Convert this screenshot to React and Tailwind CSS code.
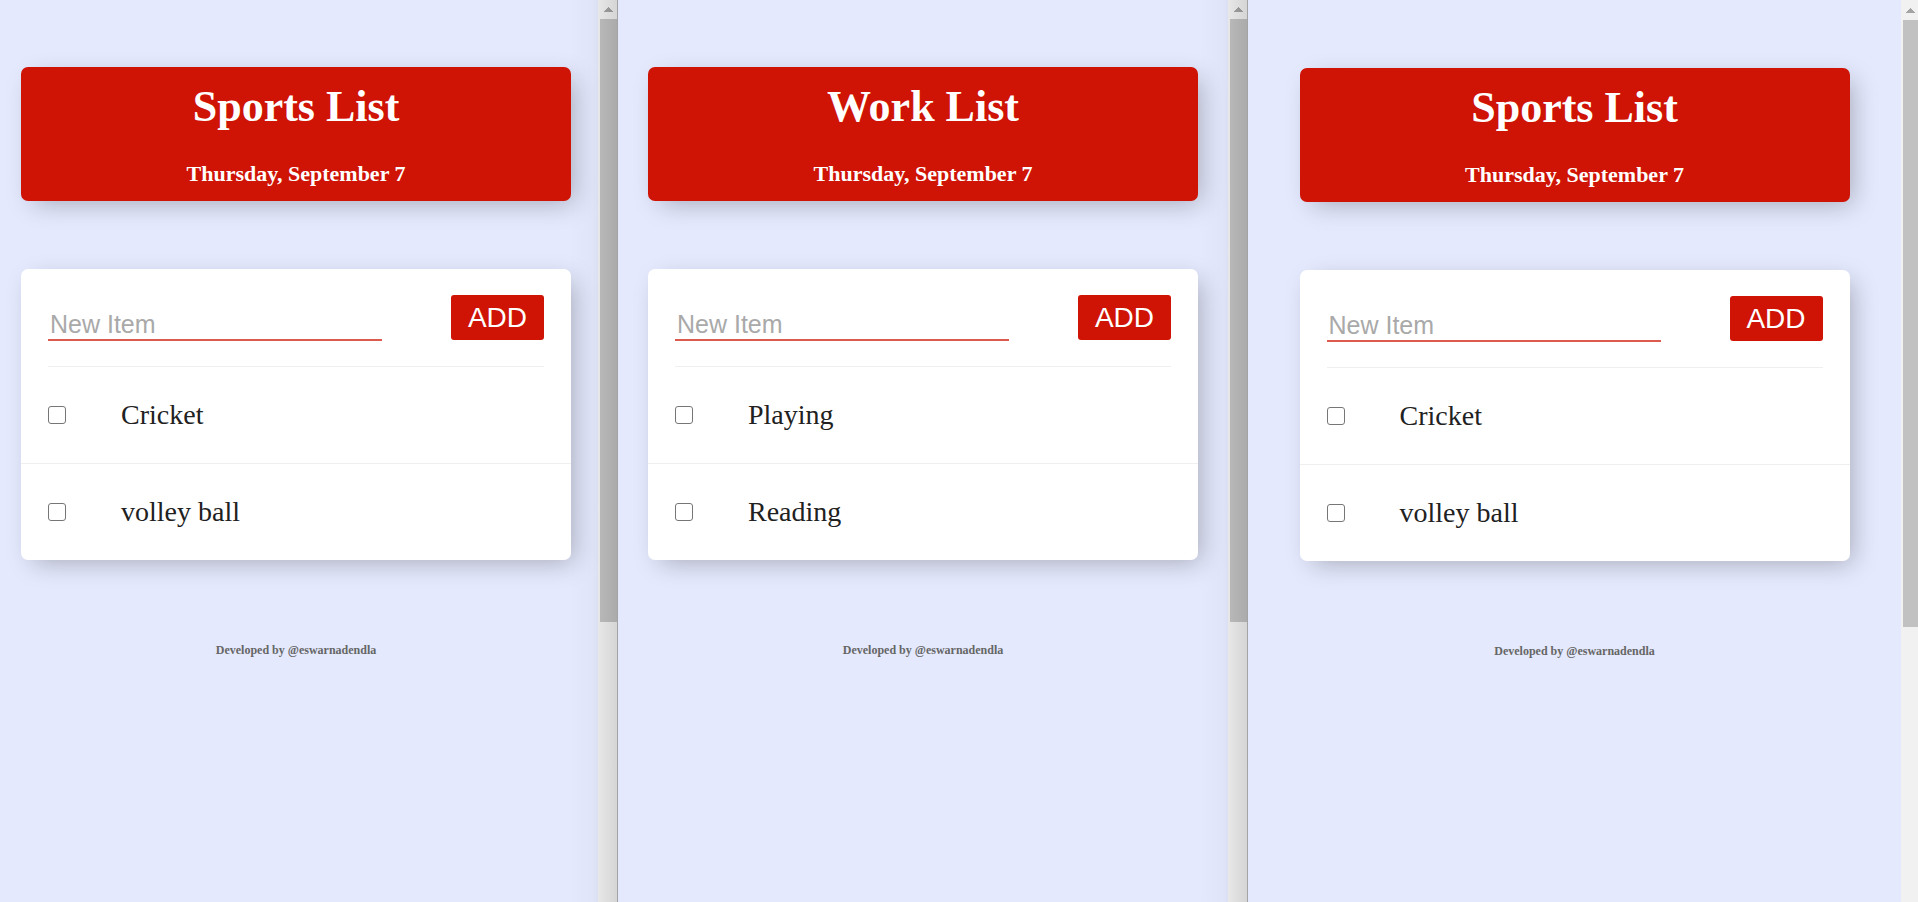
const panels = [
  { id: "a", title: "Sports List", items: ["Cricket", "volley ball"], size: "flex-[618_1_0%]", pad: "pt-[67px]", content: "pr-1.5", bar: "h-[603px]", framed: true },
  { id: "b", title: "Work List", items: ["Playing", "Reading"], size: "flex-[630_1_0%]", pad: "pt-[67px]", content: "", bar: "h-[603px]", framed: true },
  { id: "c", title: "Sports List", items: ["Cricket", "volley ball"], size: "flex-[670_1_0%]", pad: "pt-[68px]", content: "", bar: "h-[607px]", framed: false },
];

const box = "w-full max-w-[550px] rounded-[7px] shadow-[7px_7px_26px_-5px_rgba(0,0,0,0.28)]";

function ScrollBar({ bar, framed }) {
  return (
    <div className={`flex shrink-0 flex-col items-end bg-[#f1f1f1] ${framed ? "w-[19px]" : "w-[17px]"}`}>
      <div className={`flex shrink-0 items-center justify-center ${framed ? "h-[19px] w-[17px]" : "h-5 w-[15px]"}`}>
        <svg width="9" height="5" viewBox="0 0 9 5" fill="#a3a3a3" aria-hidden="true">
          <path d="M4 0h1v1h1v1h1v1h1v1h1v1H0V4h1V3h1V2h1V1h1z" />
        </svg>
      </div>
      <div className={`bg-[#c1c1c1] ${framed ? "w-[17px]" : "w-[15px]"} ${bar}`} />
    </div>
  );
}

function Panel({ id, title, items, size, pad, content, bar, framed }) {
  return (
    <section className={`relative flex min-w-0 ${size}`}>
      <div className={`flex min-w-0 flex-1 flex-col items-center ${pad} ${content}`}>
        <header className={`${box} bg-[#cf1304] px-3.5 pt-[15px] pb-3.5 text-center font-bold text-white`}>
          <h1 className="text-[44px] leading-[50px]">{title}</h1>
          <h2 className="mt-[29px] text-[22px] leading-[26px]">Thursday, September 7</h2>
        </header>
        <main className={`${box} mt-[68px] bg-white`}>
          <form className="mx-[27px] flex items-start justify-between border-b border-[#efefef] pt-[26px] pb-[25px]" onSubmit={(e) => e.preventDefault()}>
            <input
              type="text"
              aria-label="New Item"
              placeholder="New Item"
              className="mt-3.5 h-8 w-[334px] min-w-0 rounded-none border-b-2 border-[#dd5a4f] bg-transparent px-0.5 font-['Liberation_Sans',Arial,sans-serif] text-[25px] leading-[30px] outline-none placeholder:text-[#a9a9a9]"
            />
            <button type="submit" className="h-[45px] w-[93px] rounded-[3px] bg-[#cf1304] font-['Liberation_Sans',Arial,sans-serif] text-[28px] leading-8 text-white">
              ADD
            </button>
          </form>
          <ul>
            {items.map((item, i) => (
              <li key={item} className={`flex items-center px-[27px] ${i > 0 ? "h-[97px] border-t border-[#efefef]" : "h-24"}`}>
                <input
                  id={`${id}-${i}`}
                  type="checkbox"
                  className="size-[18px] shrink-0 appearance-none rounded-[3px] border border-[#767676] bg-white checked:bg-[#cf1304]"
                />
                <label htmlFor={`${id}-${i}`} className="ml-[55px] text-[28px] leading-8 text-[#212121]">
                  {item}
                </label>
              </li>
            ))}
          </ul>
        </main>
        <footer className="mt-[82px] text-[12px] leading-4 font-bold text-[#666]">Developed by @eswarnadendla</footer>
      </div>
      <ScrollBar bar={bar} framed={framed} />
      {framed && <div className="w-px shrink-0 bg-[#b9b9b9]" />}
      {framed && <div className="pointer-events-none absolute inset-y-0 right-0 w-[50px] bg-linear-to-r from-black/0 via-black/2 to-black/12" />}
    </section>
  );
}

export default function App() {
  return (
    <div className="flex min-h-screen bg-[#e4e9fd] font-['Liberation_Serif','Times_New_Roman',serif]">
      {panels.map((p) => (
        <Panel key={p.id} {...p} />
      ))}
    </div>
  );
}
